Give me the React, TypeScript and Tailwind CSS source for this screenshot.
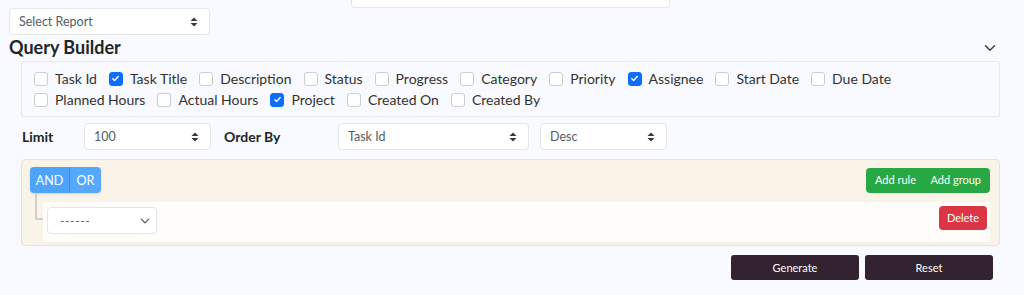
import React from 'react';

const fields: { label: string; checked: boolean }[] = [
  { label: 'Task Id', checked: false },
  { label: 'Task Title', checked: true },
  { label: 'Description', checked: false },
  { label: 'Status', checked: false },
  { label: 'Progress', checked: false },
  { label: 'Category', checked: false },
  { label: 'Priority', checked: false },
  { label: 'Assignee', checked: true },
  { label: 'Start Date', checked: false },
  { label: 'Due Date', checked: false },
  { label: 'Planned Hours', checked: false },
  { label: 'Actual Hours', checked: false },
  { label: 'Project', checked: true },
  { label: 'Created On', checked: false },
  { label: 'Created By', checked: false },
];

const UpDown = () => (
  <svg width="8" height="10" viewBox="0 0 8 10" className="shrink-0">
    <path d="M4 0.5 L7.5 4 L0.5 4 Z" fill="#343a40" />
    <path d="M4 9.5 L7.5 6 L0.5 6 Z" fill="#343a40" />
  </svg>
);

const Chevron = ({ size = 10, color = '#343a40' }: { size?: number; color?: string }) => (
  <svg width={size} height={size} viewBox="0 0 16 16" fill="none" className="shrink-0">
    <path d="M2 5l6 6 6-6" stroke={color} strokeWidth="2" strokeLinecap="round" strokeLinejoin="round" />
  </svg>
);

const FakeSelect = ({ text, className }: { text: string; className: string }) => (
  <div
    className={`flex items-center justify-between bg-white border border-[#e3e6ea] rounded-[4px] pl-[9px] pr-[11px] text-[12.5px] text-[#555c63] ${className}`}
  >
    <span className="pt-[2px]">{text}</span>
    <UpDown />
  </div>
);

const CheckItem = ({ label, checked }: { label: string; checked: boolean }) => (
  <label className="flex items-center h-[21px] mr-[12px]">
    {checked ? (
      <span className="w-[14px] h-[14px] rounded-[3px] bg-[#0d6efd] border border-[#0d6efd] flex items-center justify-center">
        <svg width="9" height="9" viewBox="0 0 10 10" fill="none">
          <path d="M2 5.2l2 2 4-4.4" stroke="white" strokeWidth="1.6" strokeLinecap="round" strokeLinejoin="round" />
        </svg>
      </span>
    ) : (
      <span className="w-[14px] h-[14px] rounded-[3px] bg-white border border-[#c9ced4]" />
    )}
    <span className="ml-[7px] text-[14px] text-[#333]">{label}</span>
  </label>
);

export default function App() {
  return (
    <div
      className="w-[1024px] h-[295px] bg-[#f8faff] overflow-hidden"
      style={{ fontFamily: 'Lato, "Noto Sans", sans-serif' }}
    >
      <div className="h-[8px] flex">
        <div className="ml-[351px] w-[319px] h-full bg-white border border-t-0 border-[#e3e6ea] rounded-b-[4px]" />
      </div>

      <div className="pl-[9px]">
        <FakeSelect text="Select Report" className="w-[201px] h-[27px]" />
      </div>

      <div className="flex items-center justify-between pl-[9px] pr-[28px] h-[26px]">
        <h2 className="text-[18px] font-bold text-[#212529] leading-none -mt-[2px]">Query Builder</h2>
        <Chevron size={12} color="#3a3f44" />
      </div>

      <div className="ml-[21px] mr-[24px] border border-[#e6e9ee] rounded-[2px] pl-[12px] pr-[8px] py-[6px] flex flex-wrap">
        {fields.map((f) => (
          <CheckItem key={f.label} label={f.label} checked={f.checked} />
        ))}
      </div>

      <div className="flex items-center mt-[6px] h-[27px]">
        <span className="ml-[22px] w-[62px] text-[14px] font-bold text-[#212529]">Limit</span>
        <FakeSelect text="100" className="w-[127px] h-[27px]" />
        <span className="ml-[13px] w-[114px] text-[14px] font-bold text-[#212529]">Order By</span>
        <FakeSelect text="Task Id" className="w-[191px] h-[27px]" />
        <FakeSelect text="Desc" className="ml-[11px] w-[127px] h-[27px]" />
      </div>

      <div className="ml-[21px] mr-[24px] mt-[9px] bg-[#faf3e7] border border-[#efe2c9] rounded-[4px] pl-[8px] pr-[9px] pt-[7px] pb-[3px]">
        <div className="flex items-center justify-between">
          <div className="flex h-[26px] rounded-[4px] overflow-hidden shadow-sm">
            <button className="w-[40px] bg-[#4ea3fb] text-white text-[12.5px] border-r border-[#2f8ff5] pt-[2px]">AND</button>
            <button className="w-[31px] bg-[#55a8fc] text-white text-[12.5px] pt-[2px]">OR</button>
          </div>
          <div className="flex w-[124px] h-[25px] rounded-[4px] bg-[#28a745] text-white text-[11px] items-center justify-between px-[9px] pt-[1px]">
            <span>Add rule</span>
            <span>Add group</span>
          </div>
        </div>
        <div className="flex">
          <div className="w-[13px] flex flex-col">
            <div className="ml-[5px] h-[27px] w-[8px] border-l-2 border-b-2 border-[#cfcfcf] rounded-bl-[2px]" />
          </div>
          <div className="flex-1 mt-[9px] bg-[#fffdfa] rounded-[3px] h-[40px] flex items-start justify-between pl-[4px] pr-[3px]">
            <div className="mt-[5px] w-[110px] h-[27px] bg-white border border-[#e3e6ea] rounded-[4px] flex items-center justify-between pl-[12px] pr-[6px] text-[12px] text-[#555c63]">
              <span className="tracking-[0.6px]">------</span>
              <Chevron size={10} color="#555c63" />
            </div>
            <button className="mt-[4px] w-[48px] h-[24px] rounded-[4px] bg-[#dc3545] text-white text-[11px] pt-[1px]">Delete</button>
          </div>
        </div>
      </div>

      <div className="flex justify-end gap-[6px] mt-[9px] pr-[31px]">
        <button className="w-[128px] h-[25px] rounded-[3px] bg-[#33222f] text-white text-[11px] pt-[2px]">Generate</button>
        <button className="w-[128px] h-[25px] rounded-[3px] bg-[#33222f] text-white text-[11px] pt-[2px]">Reset</button>
      </div>
    </div>
  );
}
